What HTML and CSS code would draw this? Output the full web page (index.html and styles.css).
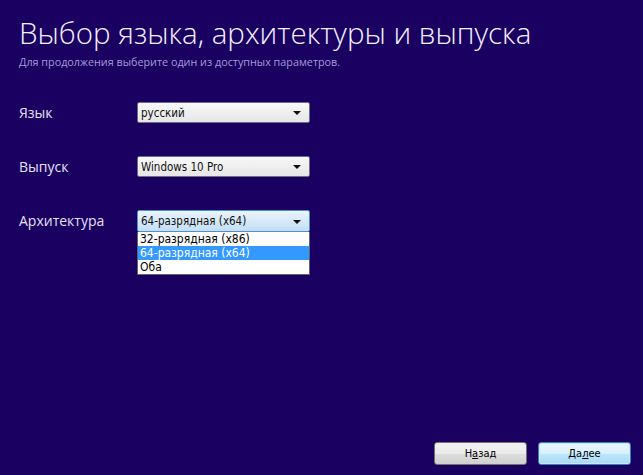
FILE: index.html
```html
<!DOCTYPE html>
<html lang="ru">
<head>
    <meta charset="UTF-8">
    <title>Выбор языка, архитектуры и выпуска</title>
    <link rel="stylesheet" href="styles.css">
</head>
<body>
    <div class="page">
        <h1>Выбор языка, архитектуры и выпуска</h1>
        <p class="hint">Для продолжения выберите один из доступных параметров.</p>

        <div class="form">
            <div class="row">
                <span class="label">Язык</span>
                <div class="combo">
                    <span class="value">русский</span>
                    <span class="arrow"></span>
                </div>
            </div>

            <div class="row">
                <span class="label">Выпуск</span>
                <div class="combo">
                    <span class="value">Windows 10 Pro</span>
                    <span class="arrow"></span>
                </div>
            </div>

            <div class="row">
                <span class="label">Архитектура</span>
                <div class="combo-wrap">
                    <div class="combo open">
                        <span class="value">64-разрядная (x64)</span>
                        <span class="arrow"></span>
                    </div>
                    <ul class="list">
                        <li>32-разрядная (x86)</li>
                        <li class="selected">64-разрядная (x64)</li>
                        <li>Оба</li>
                    </ul>
                </div>
            </div>
        </div>

        <div class="footer">
            <button class="btn">Н<u>а</u>зад</button>
            <button class="btn default">Да<u>л</u>ее</button>
        </div>
    </div>
</body>
</html>
```

FILE: styles.css
```css
html, body {
    margin: 0;
    height: 100%;
}
body {
    background-color: #1a0061;
    font-family: "Open Sans", "Noto Sans", sans-serif;
    color: #fff;
}
.page {
    height: 100%;
    box-sizing: border-box;
    padding: 12px 12px 10px 19px;
    display: flex;
    flex-direction: column;
}
h1 {
    margin: 0;
    font-size: 29.5px;
    font-weight: 300;
    line-height: 42px;
    color: #f2f0ff;
}
.hint {
    margin: 0;
    font-size: 10.8px;
    color: #a49bd8;
}
.form {
    margin-top: 33px;
    display: flex;
    flex-direction: column;
    gap: 33px;
}
.row {
    display: grid;
    grid-template-columns: 118px 173px;
    align-items: start;
}
.label {
    font-size: 14px;
    line-height: 21px;
    color: #e4e1f5;
}
.combo {
    height: 21px;
    box-sizing: border-box;
    border: 1px solid #6d6a8a;
    border-radius: 2px;
    background: linear-gradient(#f8f8f8, #e6e6e6);
    display: flex;
    align-items: center;
    justify-content: space-between;
    padding: 0 8px 0 3px;
    color: #111;
    font-family: "DejaVu Sans", sans-serif;
    font-stretch: condensed;
    font-size: 11.5px;
}
.combo.open {
    height: 22px;
    border-color: #4f8fd0;
    background: linear-gradient(#eaf4fc, #c3def5);
}
.arrow {
    width: 0;
    height: 0;
    border-left: 4px solid transparent;
    border-right: 4px solid transparent;
    border-top: 4px solid #111;
    margin-top: 1px;
}
.list {
    margin: 0;
    padding: 0;
    list-style: none;
    background: #fff;
    border: 1px solid #646464;
    border-top: none;
    color: #000;
    font-family: "DejaVu Sans", sans-serif;
    font-stretch: condensed;
    font-size: 12px;
}
.list li {
    height: 14px;
    line-height: 14px;
    padding: 0 2px;
}
.list li.selected {
    background: #3399ff;
    color: #fff;
}
.footer {
    margin-top: auto;
    display: flex;
    justify-content: flex-end;
    gap: 11px;
}
.btn {
    width: 93px;
    height: 23px;
    border: 1px solid #707070;
    border-radius: 3px;
    background: linear-gradient(#f2f2f2 0%, #ebebeb 50%, #dddddd 51%, #cfcfcf 100%);
    font-family: "DejaVu Sans", sans-serif;
    font-stretch: condensed;
    font-size: 11px;
    color: #000;
    padding: 0;
}
.btn.default {
    border-color: #3c7fb1;
    background: linear-gradient(#eaf6fd 0%, #d9f0fc 50%, #bee6fd 51%, #a7d9f5 100%);
    box-shadow: inset 0 0 0 1px #c7e9fc;
}
```
